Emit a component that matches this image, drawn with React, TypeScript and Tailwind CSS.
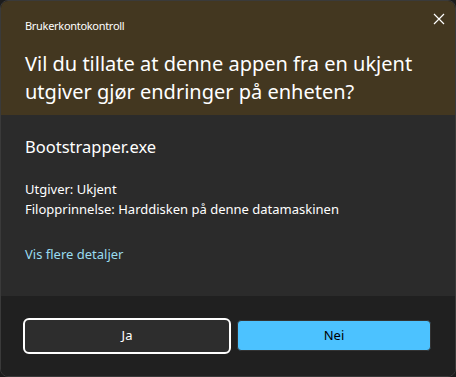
export default function App() {
  return (
    <div className="w-[456px] h-[377px] bg-[#1c1c1c]" style={{ fontFamily: '"Noto Sans", "Open Sans", sans-serif' }}>
      <div className="w-full h-full flex flex-col rounded-lg overflow-hidden border border-[#3a3a3a]">
        {/* header */}
        <div className="relative bg-[#433720] h-[114px] px-6 pt-[17px]">
          <div className="text-[11px] leading-4 tracking-[-0.3px] text-white">Brukerkontokontroll</div>
          <h1 className="mt-[16px] text-[20px] leading-[28px] text-white">
            Vil du tillate at denne appen fra en ukjent utgiver gjør endringer på enheten?
          </h1>
          <button className="absolute top-[10px] right-[8px] w-4 h-4 flex items-center justify-center">
            <svg width="12" height="12" viewBox="0 0 12 12" stroke="#ffffff" strokeWidth="1.2">
              <path d="M1 1 L11 11 M11 1 L1 11" />
            </svg>
          </button>
        </div>

        {/* body */}
        <div className="bg-[#2b2b2b] h-[181px] px-6 pt-[22px]">
          <div className="text-[16.5px] leading-5 text-white">Bootstrapper.exe</div>
          <div className="mt-[22px] text-[13px] leading-5 text-white">
            <p>Utgiver: Ukjent</p>
            <p>Filopprinnelse: Harddisken på denne datamaskinen</p>
          </div>
          <div className="mt-[25px] text-[13px] leading-5 text-[#99dcef]">Vis flere detaljer</div>
        </div>

        {/* footer */}
        <div className="flex-1 bg-[#202020] flex items-start gap-2 pl-6 pt-[24px]">
          <button className="w-[204px] h-[32px] rounded-[4px] bg-[#2d2d2d] text-[13px] text-white outline-2 outline-white">
            Ja
          </button>
          <button className="w-[194px] h-[31px] rounded-[4px] bg-[#4cc2ff] border border-[#333333] text-[13px] text-black">
            Nei
          </button>
        </div>
      </div>
    </div>
  );
}
